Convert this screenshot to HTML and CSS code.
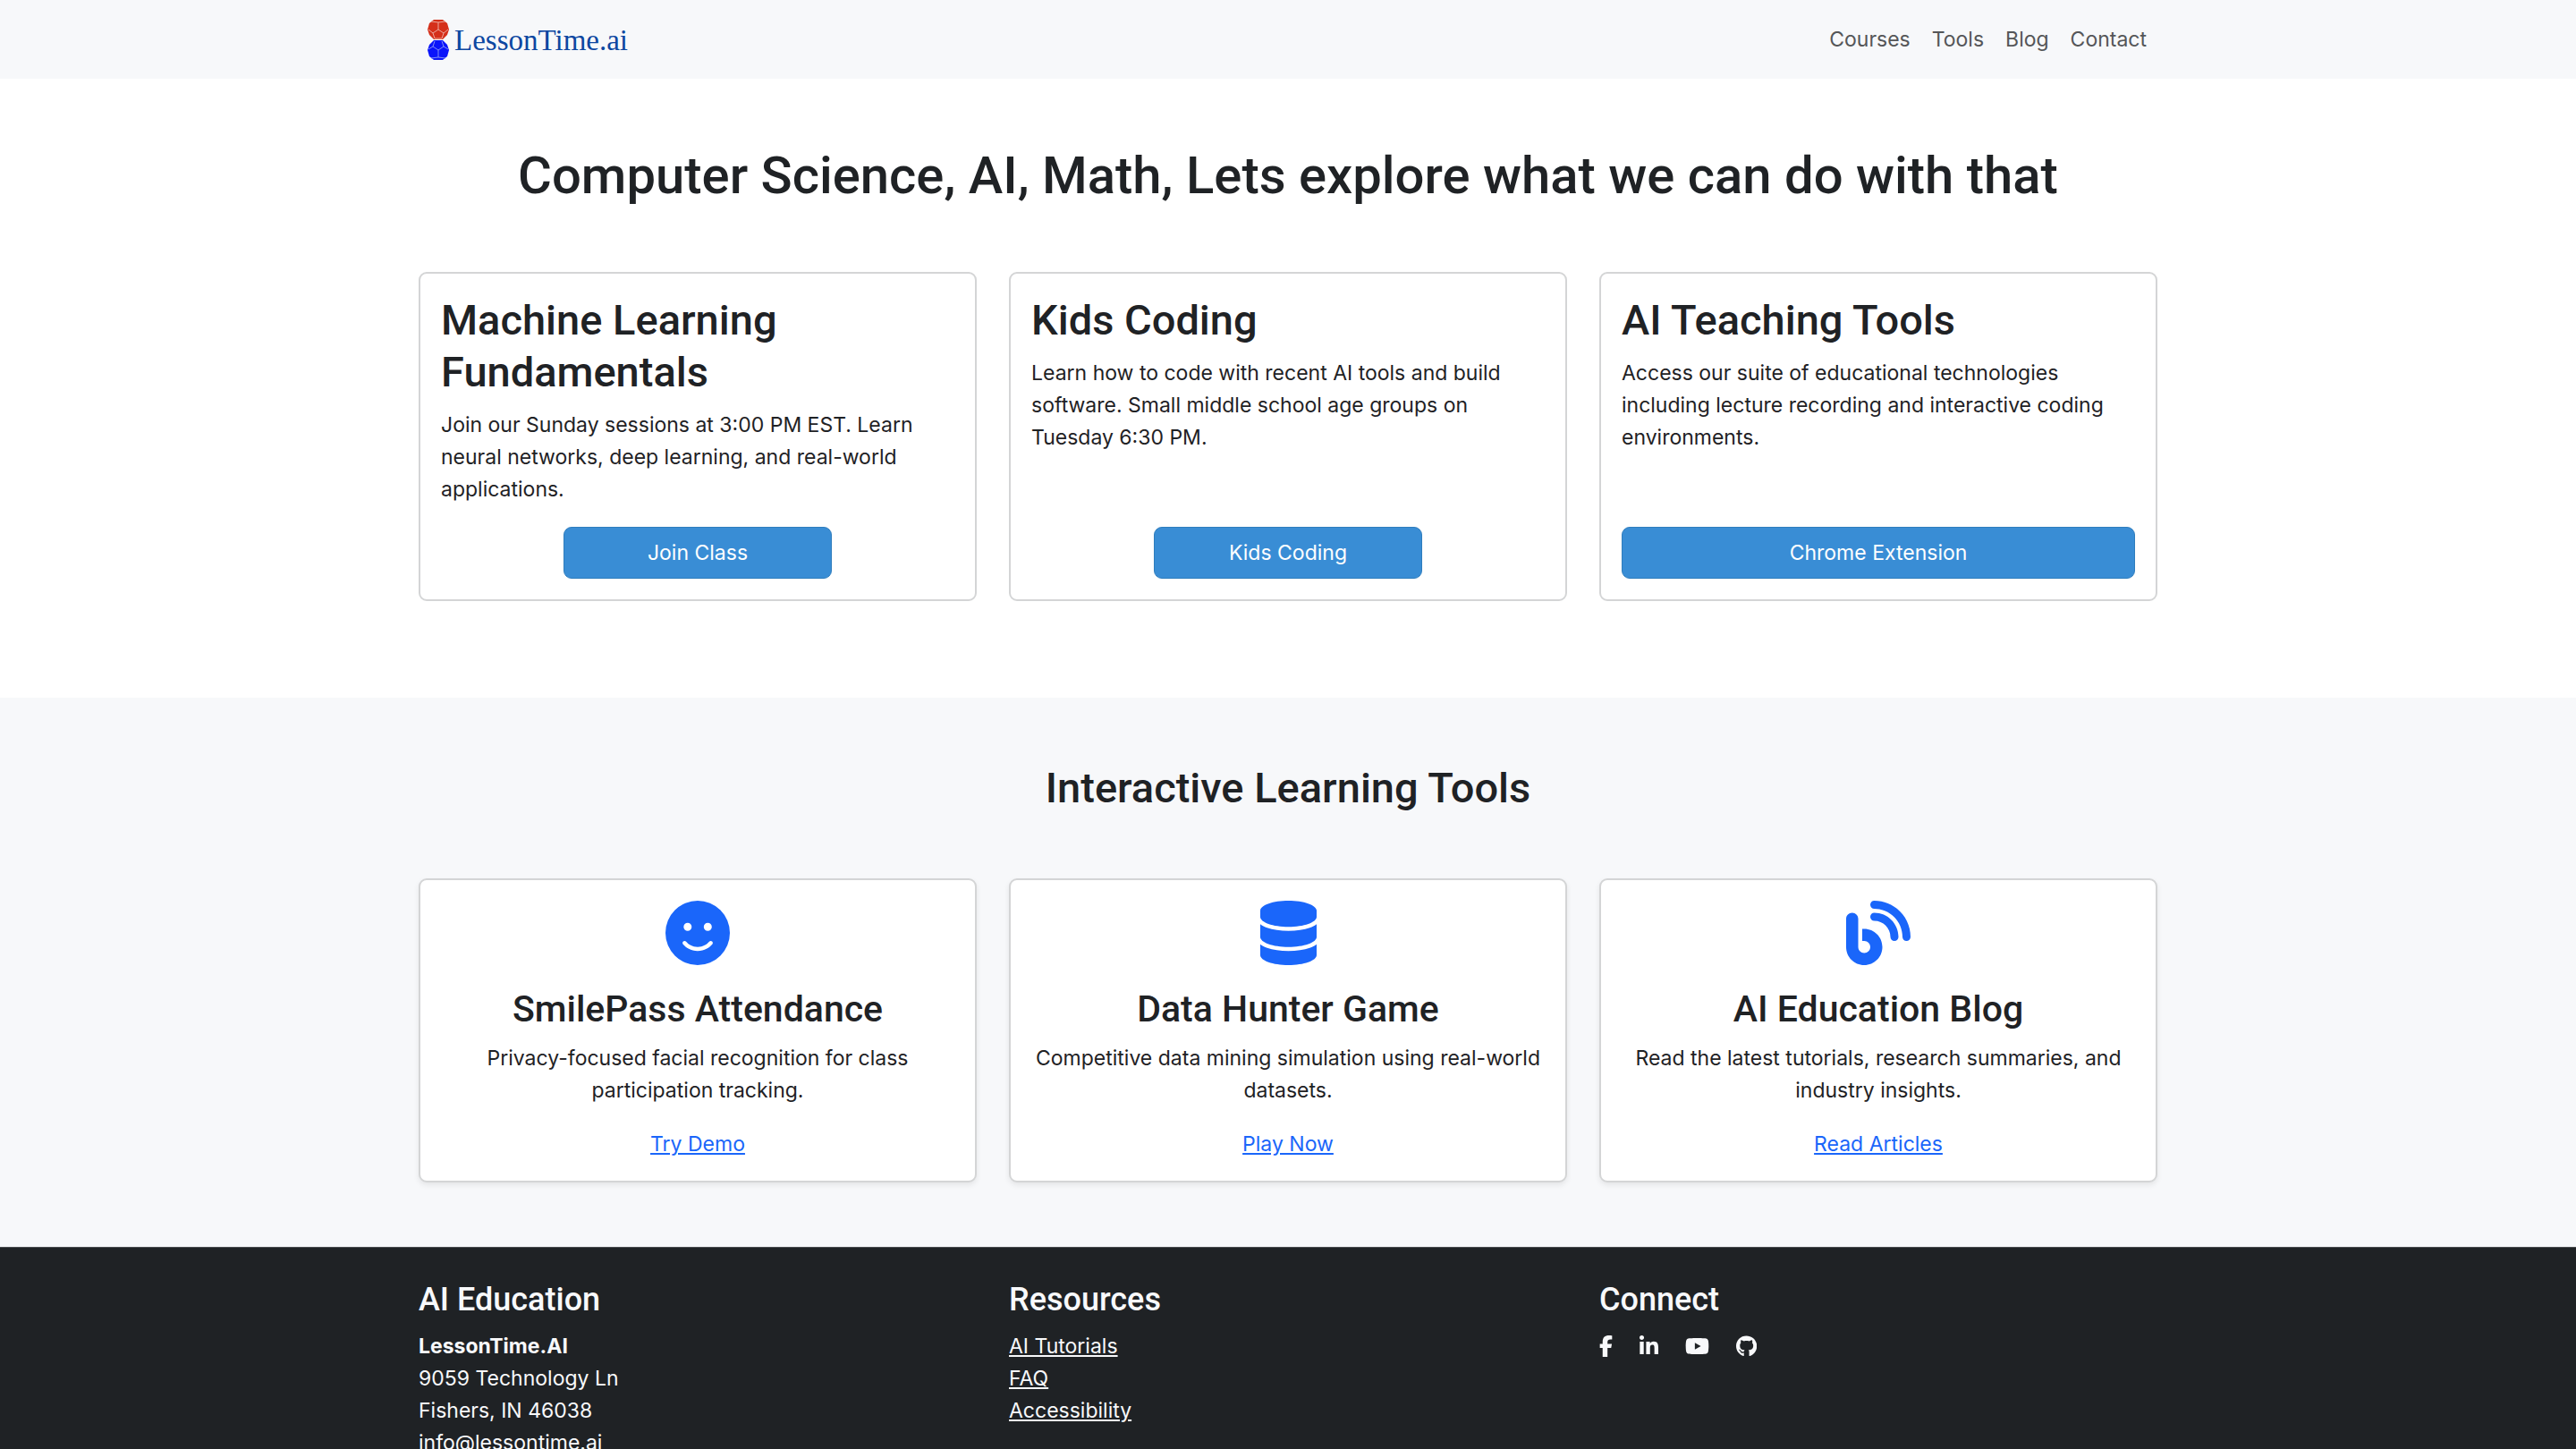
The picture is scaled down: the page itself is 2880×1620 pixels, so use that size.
FILE: index.html
```html
<!DOCTYPE html>
<html lang="en">
<head>
<meta charset="utf-8">
<meta name="viewport" content="width=device-width, initial-scale=1">
<title>LessonTime.ai</title>
<link rel="stylesheet" href="styles.css">
</head>
<body>
<header class="site-header">
  <div class="container header-row">
    <a class="brand" href="#">
      <svg class="brand-mark" viewBox="0 0 24 46" aria-hidden="true">
        <g>
          <path fill="#d5301a" d="M7 0h10l5 4 2 7-2 6-5 5H7l-5-5-2-6 2-7z"/>
          <path fill="none" stroke="#eba79c" stroke-width="1" d="M4 2l8 1 8-1M12 3v8M12 11l-6 4 2 6h8l2-6zM6 15l-5-4M18 15l5-4"/>
        </g>
        <g>
          <path fill="#0a14fa" d="M7 23h10l5 5 2 6-2 7-5 4H7l-5-4-2-7 2-6z"/>
          <path fill="none" stroke="#7f8cf5" stroke-width="1" d="M8 24l-2 6 6 4 6-4-2-6M6 30l-5 3M18 30l5 3M12 34v8M4 43l8-1 8 1"/>
        </g>
      </svg>
      <span>LessonTime.ai</span>
    </a>
    <nav class="main-nav" aria-label="Main">
      <a href="#courses">Courses</a>
      <a href="#tools">Tools</a>
      <a href="#blog">Blog</a>
      <a href="#contact">Contact</a>
    </nav>
  </div>
</header>

<main>
  <section class="section" id="courses">
    <div class="container">
      <h1 class="hero-title">Computer Science, AI, Math, Lets explore what we can do with that</h1>
      <div class="grid courses">
        <article class="card course">
          <h2>Machine Learning Fundamentals</h2>
          <p>Join our Sunday sessions at 3:00 PM EST. Learn neural networks, deep learning, and real-world applications.</p>
          <button class="btn" type="button">Join Class</button>
        </article>
        <article class="card course">
          <h2>Kids Coding</h2>
          <p>Learn how to code with recent AI tools and build software. Small middle school age groups on Tuesday 6:30 PM.</p>
          <button class="btn" type="button">Kids Coding</button>
        </article>
        <article class="card course">
          <h2>AI Teaching Tools</h2>
          <p>Access our suite of educational technologies including lecture recording and interactive coding environments.</p>
          <button class="btn btn-wide" type="button">Chrome Extension</button>
        </article>
      </div>
    </div>
  </section>

  <section class="section section-light" id="tools">
    <div class="container">
      <h2 class="section-title">Interactive Learning Tools</h2>
      <div class="grid">
        <article class="card tool">
          <svg class="tool-icon" viewBox="0 0 512 512" aria-hidden="true"><path d="M256 512A256 256 0 1 0 256 0a256 256 0 1 0 0 512zM164.100 325.500C182 346.200 212.600 368 256 368s74-21.800 91.900-42.500c5.800-6.700 15.900-7.400 22.600-1.600s7.400 15.900 1.600 22.600C349.800 372.100 311.100 400 256 400s-93.800-27.900-116.100-53.500c-5.800-6.700-5.100-16.800 1.600-22.600s16.800-5.100 22.600 1.600zM144.400 208a32 32 0 1 1 64 0 32 32 0 1 1 -64 0zm192-32a32 32 0 1 1 0 64 32 32 0 1 1 0-64z"/></svg>
          <h3>SmilePass Attendance</h3>
          <p>Privacy-focused facial recognition for class participation tracking.</p>
          <a href="#demo">Try Demo</a>
        </article>
        <article class="card tool">
          <svg class="tool-icon" viewBox="0 0 448 512" aria-hidden="true"><path d="M448 80v48c0 44.200-100.300 80-224 80S0 172.200 0 128V80C0 35.800 100.300 0 224 0S448 35.800 448 80zM393.200 214.700c20.800-7.400 39.900-16.900 54.800-28.600V288c0 44.200-100.300 80-224 80S0 332.200 0 288V186.100c14.900 11.800 34 21.200 54.800 28.600C99.700 230.700 159.500 240 224 240s124.300-9.300 169.200-25.300zM0 346.100c14.900 11.800 34 21.200 54.800 28.600C99.700 390.700 159.500 400 224 400s124.300-9.300 169.200-25.300c20.800-7.400 39.900-16.900 54.800-28.600V432c0 44.200-100.300 80-224 80S0 476.200 0 432V346.100z"/></svg>
          <h3>Data Hunter Game</h3>
          <p>Competitive data mining simulation using real-world datasets.</p>
          <a href="#play">Play Now</a>
        </article>
        <article class="card tool" id="blog">
          <svg class="tool-icon" viewBox="0 0 512 512" aria-hidden="true"><path d="M192 32c0 17.700 14.300 32 32 32c123.700 0 224 100.300 224 224c0 17.700 14.300 32 32 32s32-14.300 32-32C512 128.900 383.100 0 224 0c-17.700 0-32 14.300-32 32zm0 96c0 17.700 14.300 32 32 32c70.700 0 128 57.300 128 128c0 17.700 14.300 32 32 32s32-14.300 32-32c0-106-86-192-192-192c-17.700 0-32 14.300-32 32zM96 144c0-26.500-21.500-48-48-48S0 117.500 0 144V368c0 79.500 64.500 144 144 144s144-64.500 144-144s-64.500-144-144-144H128v96h16c26.500 0 48 21.500 48 48s-21.500 48-48 48s-48-21.500-48-48V144z"/></svg>
          <h3>AI Education Blog</h3>
          <p>Read the latest tutorials, research summaries, and industry insights.</p>
          <a href="#articles">Read Articles</a>
        </article>
      </div>
    </div>
  </section>
</main>

<footer class="site-footer" id="contact">
  <div class="container grid">
    <section>
      <h4>AI Education</h4>
      <address><strong>LessonTime.AI</strong><br>9059 Technology Ln<br>Fishers, IN 46038<br>info@lessontime.ai</address>
    </section>
    <section>
      <h4>Resources</h4>
      <ul class="links">
        <li><a href="#tutorials">AI Tutorials</a></li>
        <li><a href="#faq">FAQ</a></li>
        <li><a href="#accessibility">Accessibility</a></li>
      </ul>
    </section>
    <section>
      <h4>Connect</h4>
      <div class="social">
        <a href="#facebook" aria-label="Facebook"><svg viewBox="0 0 320 512"><path d="M80 299.300V512H196V299.300h86.500l18-97.800H196V166.900c0-51.700 20.300-71.500 72.700-71.500c16.300 0 29.400 .4 37 1.200V7.900C291.400 4 256.400 0 236.200 0C129.300 0 80 50.500 80 159.400v42.100H14v97.800H80z"/></svg></a>
        <a href="#linkedin" aria-label="LinkedIn"><svg viewBox="0 0 448 512"><path d="M100.280 448H7.400V148.900h92.880zM53.790 108.100C24.090 108.100 0 83.500 0 53.800a53.790 53.790 0 0 1 107.580 0c0 29.700-24.100 54.300-53.790 54.300zM447.900 448h-92.680V302.400c0-34.700-.7-79.200-48.290-79.200-48.290 0-55.690 37.700-55.690 76.700V448h-92.780V148.900h89.080v40.800h1.300c12.400-23.500 42.690-48.300 87.880-48.300 94 0 111.280 61.900 111.280 142.300V448z"/></svg></a>
        <a href="#youtube" aria-label="YouTube"><svg viewBox="0 0 576 512"><path d="M549.655 124.083c-6.281-23.650-24.787-42.276-48.284-48.597C458.781 64 288 64 288 64S117.220 64 74.629 75.486c-23.497 6.322-42.003 24.947-48.284 48.597-11.412 42.867-11.412 132.305-11.412 132.305s0 89.438 11.412 132.305c6.281 23.650 24.787 41.500 48.284 47.821C117.220 448 288 448 288 448s170.780 0 213.371-11.486c23.497-6.321 42.003-24.171 48.284-47.821 11.412-42.867 11.412-132.305 11.412-132.305s0-89.438-11.412-132.305zm-317.510 213.508V175.185l142.739 81.205-142.739 81.201z"/></svg></a>
        <a href="#github" aria-label="GitHub"><svg viewBox="0 0 496 512"><path d="M244.800 8C106.100 8 0 113.300 0 252c0 110.900 69.800 205.800 169.500 239.200 12.800 2.300 17.300-5.600 17.300-12.100 0-6.200-.3-40.400-.3-61.400 0 0-70 15-84.700-29.800 0 0-11.400-29.100-27.800-36.600 0 0-22.900-15.700 1.600-15.400 0 0 24.900 2 38.600 25.800 21.900 38.600 58.600 27.500 72.900 20.900 2.300-16 8.800-27.100 16-33.700-55.900-6.200-112.300-14.300-112.300-110.500 0-27.500 7.600-41.300 23.600-58.900-2.600-6.500-11.100-33.300 2.600-67.900 20.900-6.500 69 27 69 27 20-5.600 41.500-8.500 62.800-8.500s42.800 2.900 62.800 8.500c0 0 48.100-33.600 69-27 13.700 34.700 5.200 61.400 2.600 67.900 16 17.700 25.800 31.500 25.800 58.900 0 96.500-58.900 104.200-114.800 110.500 9.200 7.900 17 22.900 17 46.400 0 33.700-.3 75.400-.3 83.600 0 6.500 4.600 14.400 17.300 12.100C428.200 457.800 496 362.900 496 252 496 113.300 383.500 8 244.800 8z"/></svg></a>
      </div>
    </section>
  </div>
</footer>
</body>
</html>
```
FILE: styles.css
```css
*, *::before, *::after { box-sizing: border-box; }

body {
  margin: 0;
  background: #fff;
  color: #1f2225;
  font-family: Inter, "Liberation Sans", sans-serif;
  font-size: 23px;
  line-height: 36px;
}

h1, h2, h3, h4, p, ul { margin: 0; padding: 0; }
h1, h2, h3, h4 { font-family: Roboto, Inter, sans-serif; font-weight: 500; }
h2 { font-size: 47px; line-height: 58px; }
h3 { font-size: 41px; line-height: 50px; }
h4 { font-size: 36px; line-height: 44px; margin-bottom: 12px; }

.container {
  width: 100%;
  max-width: 1980px;
  margin: 0 auto;
  padding: 0 18px;
}

.grid {
  display: grid;
  grid-template-columns: repeat(3, minmax(0, 1fr));
  gap: 36px;
}

/* Header */
.site-header { background: #f7f8fa; }
.header-row {
  display: flex;
  align-items: center;
  justify-content: space-between;
  min-height: 88px;
}
.brand {
  display: flex;
  align-items: center;
  gap: 6px;
  padding: 2px 0 0 10px;
  color: #0d47a1;
  font-family: "Liberation Serif", serif;
  font-size: 33px;
  text-decoration: none;
}
.brand-mark { width: 24px; height: 46px; }
.main-nav { display: flex; }
.main-nav a {
  padding: 12px;
  color: #555658;
  text-decoration: none;
}

/* Sections */
.section { padding: 72px 0; }
.section-light { background: #f7f8fa; }
.hero-title {
  margin-bottom: 72px;
  font-size: 58px;
  line-height: 72px;
  text-align: center;
}
.section-title { margin-bottom: 72px; text-align: center; }
.courses { margin-bottom: 36px; }

/* Cards */
.card {
  display: flex;
  flex-direction: column;
  padding: 23px;
  border: 2px solid #d4d5d6;
  border-radius: 9px;
  background: #fff;
}
.card h2, .card h3 { margin-bottom: 12px; }
.card p { margin-bottom: 24px; }

.btn {
  width: 300px;
  max-width: 100%;
  margin: auto auto 0;
  padding: 10px 18px;
  border: 1px solid #2f7dbd;
  border-radius: 9px;
  background: #398dd5;
  color: #fff;
  font: inherit;
  cursor: pointer;
}
.btn-wide { width: 100%; }

.tool {
  align-items: center;
  text-align: center;
  box-shadow: 0 3px 6px rgba(0, 0, 0, 0.08);
}
.tool-icon {
  height: 72px;
  margin-bottom: 24px;
  fill: #1a66fa;
}
.tool a { color: #1a66fa; }

/* Footer */
.site-footer {
  padding: 36px 0;
  border-top: 1px solid #4a4d50;
  background: #1f2225;
  color: #f8f9fb;
}
.site-footer a { color: inherit; }
address { font-style: normal; }
.links { list-style: none; }
.social { display: flex; gap: 30px; }
.social a {
  display: flex;
  align-items: center;
  height: 36px;
}
.social svg { height: 24px; fill: currentColor; }

@media (max-width: 1100px) {
  .grid { grid-template-columns: minmax(0, 1fr); }
}
```
